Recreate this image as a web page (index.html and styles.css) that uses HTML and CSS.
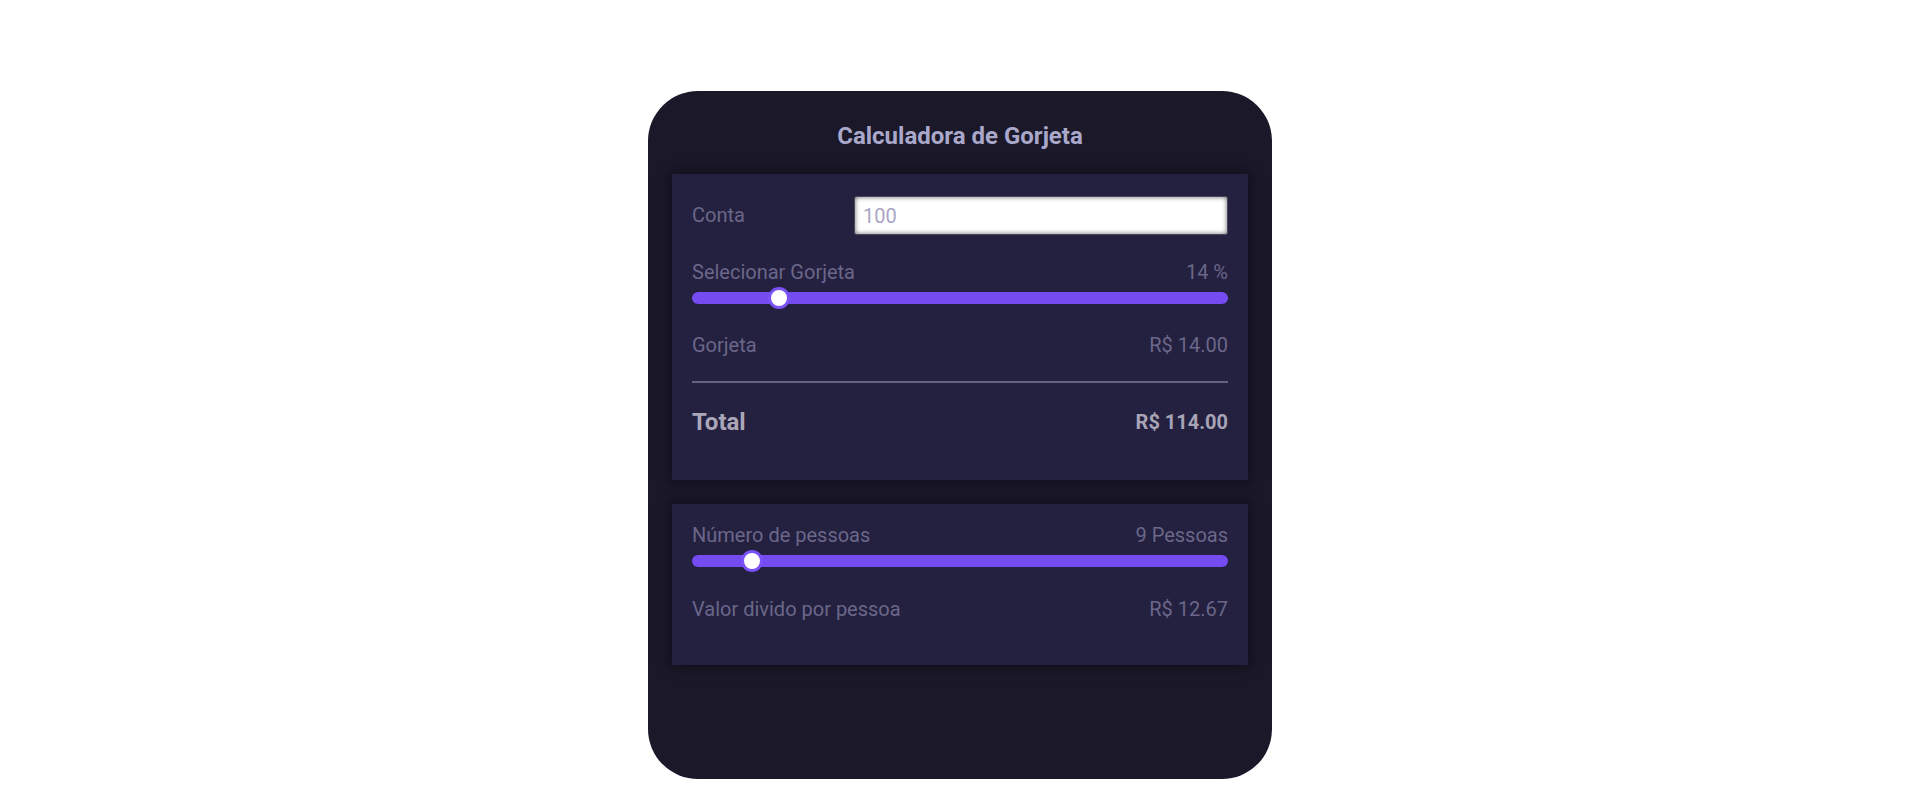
FILE: index.html
```html
<!DOCTYPE html>
<html lang="pt-BR">
<head>
<meta charset="utf-8">
<title>Calculadora de Gorjeta</title>
<link rel="stylesheet" href="styles.css">
</head>
<body>
<main class="card">
  <h1 class="title">Calculadora de Gorjeta</h1>
  <section class="panel panel-tip">
    <div class="row row-input">
      <label class="label" for="conta">Conta</label>
      <input class="bill" id="conta" type="text" placeholder="100">
    </div>
    <div class="row row-label">
      <span class="label">Selecionar Gorjeta</span>
      <span class="label">14 %</span>
    </div>
    <input class="range" type="range" min="0" max="95" value="14">
    <div class="row row-value">
      <span class="label">Gorjeta</span>
      <span class="label">R$ 14.00</span>
    </div>
    <hr class="divider">
    <div class="row row-total">
      <span class="total-label">Total</span>
      <span class="total-value">R$ 114.00</span>
    </div>
  </section>
  <section class="panel panel-people">
    <div class="row row-label first">
      <span class="label">Número de pessoas</span>
      <span class="label">9 Pessoas</span>
    </div>
    <input class="range" type="range" min="0" max="95" value="9">
    <div class="row row-value">
      <span class="label">Valor divido por pessoa</span>
      <span class="label">R$ 12.67</span>
    </div>
  </section>
</main>
</body>
</html>
```

FILE: styles.css
```css
* { box-sizing: border-box; }

html, body {
  margin: 0;
  padding: 0;
  background: #ffffff;
}

body {
  font-family: Roboto, "Noto Sans", Arial, sans-serif;
  padding-top: 91px;
}

.card {
  width: 624px;
  height: 688px;
  margin: 0 auto;
  background: #1a1829;
  border-radius: 50px;
  padding: 31px 24px 0 24px;
  display: flex;
  flex-direction: column;
}

.title {
  margin: 0 0 24px 0;
  font-size: 24px;
  line-height: 28px;
  font-weight: 700;
  text-align: center;
  color: #a9a8ca;
}

.panel {
  background: #232040;
  box-shadow: 0 0 12px rgba(0, 0, 0, 0.55);
  padding: 22px 20px 44px 20px;
  display: flex;
  flex-direction: column;
}

.panel-people {
  margin-top: 24px;
  padding-top: 20px;
}

.row {
  display: flex;
  justify-content: space-between;
  align-items: center;
}

.label {
  font-size: 20px;
  line-height: 23px;
  color: #6b6789;
}

.row-input {
  height: 39px;
}

.bill {
  width: 374px;
  height: 39px;
  border: 1px solid #4a4758;
  border-radius: 3px;
  background: #ffffff;
  box-shadow: inset 0 0 5px rgba(0, 0, 0, 0.6);
  padding: 0 8px;
  font-family: Roboto, Arial, sans-serif;
  font-size: 20px;
  color: #333;
  outline: none;
}

.bill::placeholder {
  color: #aaa4c6;
}

.row-label {
  margin-top: 26px;
}

.row-label.first {
  margin-top: 0;
}

.range {
  -webkit-appearance: none;
  appearance: none;
  width: 100%;
  height: 24px;
  margin: 2px 0 0 0;
  padding: 0;
  background: transparent;
  display: block;
}

.range::-webkit-slider-runnable-track {
  height: 12px;
  border-radius: 6px;
  background: #744cf0;
}

.range::-webkit-slider-thumb {
  -webkit-appearance: none;
  appearance: none;
  width: 22px;
  height: 22px;
  margin-top: -5px;
  border-radius: 50%;
  background: #ffffff;
  border: 3px solid #7a52f6;
}

.range::-moz-range-track {
  height: 12px;
  border-radius: 6px;
  background: #744cf0;
}

.range::-moz-range-thumb {
  width: 16px;
  height: 16px;
  border-radius: 50%;
  background: #ffffff;
  border: 3px solid #7a52f6;
}

.row-value {
  margin-top: 24px;
}

.panel-people .row-value {
  margin-top: 25px;
}

.divider {
  margin: 24px 0 0 0;
  height: 2px;
  border: 0;
  background: #66627f;
}

.row-total {
  margin-top: 25px;
}

.total-label {
  font-size: 24px;
  line-height: 28px;
  font-weight: 700;
  color: #aba7b9;
}

.total-value {
  font-size: 20px;
  line-height: 28px;
  font-weight: 700;
  color: #a8a4b6;
}
```
